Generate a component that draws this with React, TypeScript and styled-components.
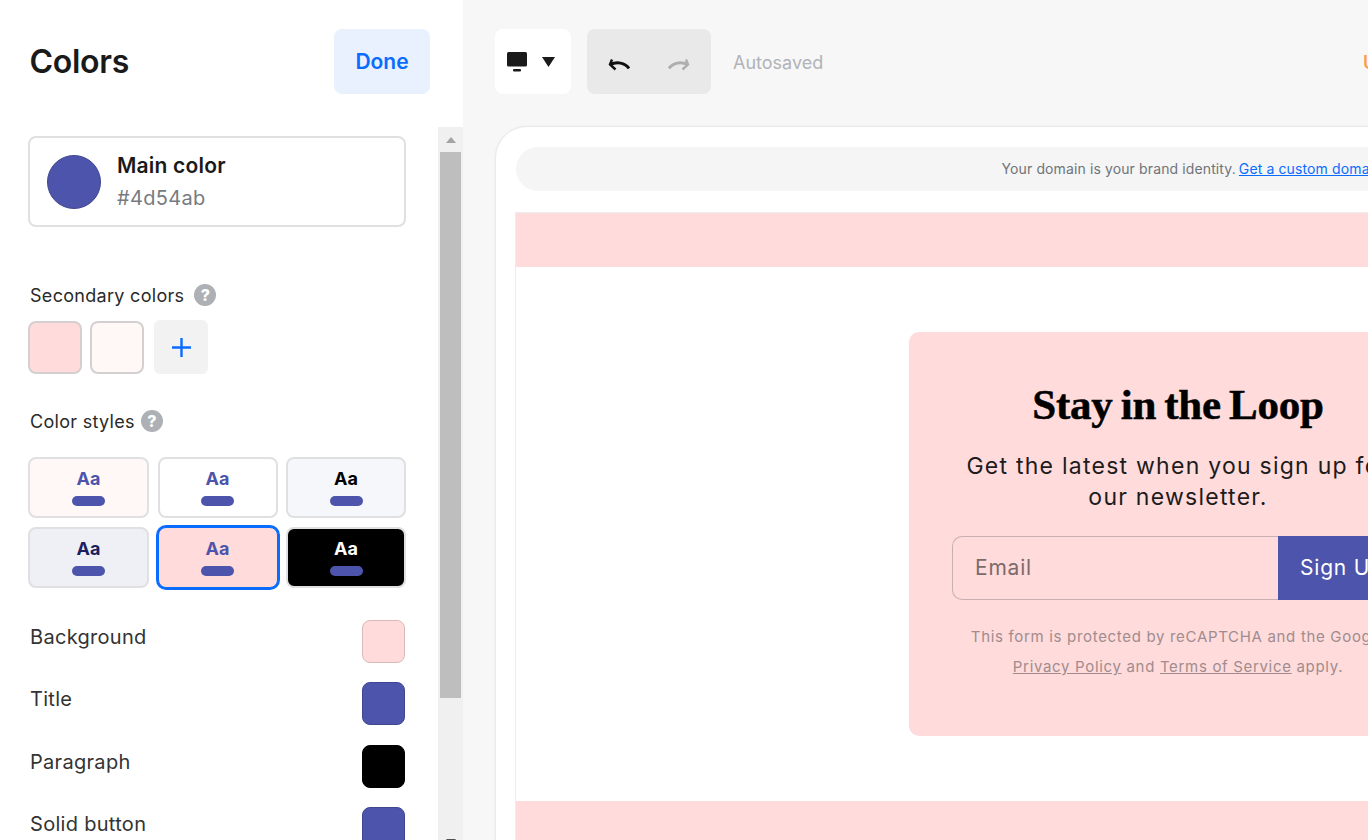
import React from "react";
import styled, { createGlobalStyle } from "styled-components";

const Global = createGlobalStyle`
  html, body { margin: 0; padding: 0; height: 100%; overflow: hidden; background: #f7f7f7; }
  #root { height: 100%; }
  * { box-sizing: border-box; }
`;

const Page = styled.div`
  display: flex;
  width: 100%;
  height: 840px;
  overflow: hidden;
  font-family: Inter, "Liberation Sans", sans-serif;
  color: #1a1a1a;
`;

const Sidebar = styled.aside`
  width: 463px;
  flex: none;
  height: 854px;
  display: flex;
  flex-direction: column;
  background: #fff;
`;

const SideHeader = styled.header`
  height: 127px;
  flex: none;
  display: flex;
  justify-content: space-between;
  padding: 29px 33px 0 29.5px;
`;

const Heading = styled.h1`
  margin: 0;
  font-size: 32px;
  line-height: 65px;
  font-weight: 600;
  letter-spacing: -0.3px;
  color: #1a1a1a;
`;

const DoneButton = styled.button`
  width: 96px;
  height: 65px;
  border: 0;
  border-radius: 8px;
  background: #e9f0fe;
  color: #0a6cff;
  font: 600 21px Inter, sans-serif;
`;

const SideBody = styled.div`
  flex: 1;
  min-height: 0;
  display: flex;
`;

const SideContent = styled.div`
  width: 438px;
  flex: none;
  overflow: hidden;
  padding: 9px 32px 0 28px;
`;

const Scrollbar = styled.div`
  width: 25px;
  flex: none;
  background: #f0f0f0;
  display: flex;
  flex-direction: column;
  align-items: center;
`;

const ArrowSlot = styled.div`
  width: 100%;
  height: 25px;
  flex: none;
  display: flex;
  align-items: center;
  justify-content: center;
`;

const ScrollTrack = styled.div`
  flex: 1;
  width: 100%;
  padding: 0 2px;
`;

const ScrollThumb = styled.div`
  height: 546px;
  background: #bebebe;
`;

const Triangle = styled.div<{ $down?: boolean }>`
  width: 0;
  height: 0;
  border-left: 5.5px solid transparent;
  border-right: 5.5px solid transparent;
  ${(p) =>
    p.$down
      ? `border-top: 6px solid #505050;`
      : `border-bottom: 6px solid #a3a3a3;`}
`;

const MainCard = styled.div`
  height: 91px;
  border: 2px solid #e0e0e2;
  border-radius: 8px;
  display: flex;
  align-items: center;
  padding-left: 17px;
  gap: 16px;
`;

const MainDot = styled.div`
  width: 54px;
  height: 54px;
  border-radius: 50%;
  background: #4d54ab;
  border: 1px solid #41478f;
`;

const MainText = styled.div`
  display: flex;
  flex-direction: column;
`;

const MainName = styled.div`
  font-size: 21px;
  line-height: 32px;
  font-weight: 600;
  letter-spacing: 0.2px;
  color: #1a1a1a;
`;

const MainHex = styled.div`
  font-size: 20px;
  line-height: 32px;
  letter-spacing: 0.3px;
  color: #777b80;
`;

const SectionLabel = styled.div<{ $top: number; $gap: number }>`
  display: flex;
  align-items: center;
  gap: ${(p) => p.$gap}px;
  height: 20px;
  margin-top: ${(p) => p.$top}px;
  padding-left: 2px;
  font-size: 18px;
  font-weight: 400;
  letter-spacing: 0.3px;
  color: #2a2a2a;
`;

const HelpDot = styled.span`
  width: 22px;
  height: 22px;
  border-radius: 50%;
  background: #adb0b4;
  color: #fff;
  font-size: 16px;
  font-weight: 800;
  display: inline-flex;
  align-items: center;
  justify-content: center;
  letter-spacing: 0;
`;

const SwatchRow = styled.div`
  display: flex;
  margin-top: 15px;
  align-items: flex-end;
`;

const SecondarySwatch = styled.div<{ $color: string }>`
  width: 54px;
  height: 53px;
  margin-right: 8px;
  border-radius: 8px;
  background: ${(p) => p.$color};
  border: 2px solid #d4d0d0;
`;

const AddSwatch = styled.button`
  width: 54px;
  height: 54px;
  margin-left: 2px;
  border: 0;
  border-radius: 6px;
  background: #f2f2f2;
  display: flex;
  align-items: center;
  justify-content: center;
  padding: 0;
`;

const StyleGrid = styled.div`
  display: grid;
  grid-template-columns: 121px 120px 120px;
  grid-auto-rows: 61px;
  gap: 9px 8.5px;
  margin-top: 26px;
`;

const StyleCard = styled.div<{ $bg: string; $selected?: boolean }>`
  display: flex;
  flex-direction: column;
  align-items: center;
  padding-top: 9px;
  border-radius: 8px;
  background: ${(p) => p.$bg};
  border: 2px solid #e0e0e2;
  ${(p) => p.$selected && `box-shadow: 0 0 0 2px #0a6cff; border-color: #0a6cff; border-width: 1px; padding-top: 10px;`}
`;

const StyleAa = styled.div<{ $color: string }>`
  font-size: 18px;
  line-height: 22px;
  font-weight: 700;
  color: ${(p) => p.$color};
`;

const StylePill = styled.div`
  width: 33px;
  height: 10px;
  margin-top: 6px;
  border-radius: 5px;
  background: #4d54ab;
`;

const ColorRows = styled.div`
  margin-top: 32px;
  display: flex;
  flex-direction: column;
  gap: 19.3px;
`;

const ColorRow = styled.div`
  display: flex;
  justify-content: space-between;
  align-items: flex-start;
  height: 43px;
  padding: 0 1px 0 2px;
`;

const ColorLabel = styled.div`
  font-size: 20px;
  line-height: 34px;
  font-weight: 400;
  letter-spacing: 0.3px;
  color: #333;
`;

const ColorSwatch = styled.div<{ $color: string; $edge: string }>`
  width: 43px;
  height: 43px;
  border-radius: 8px;
  background: ${(p) => p.$color};
  border: 1px solid ${(p) => p.$edge};
`;

const Main = styled.main`
  flex: 1;
  min-width: 0;
  height: 840px;
  overflow: hidden;
  background: #f7f7f7;
  padding-left: 32px;
`;

const Toolbar = styled.div`
  height: 126px;
  padding-top: 29px;
  display: flex;
  align-items: flex-start;
  width: 873px;
`;

const DeviceButton = styled.div`
  width: 76px;
  height: 65px;
  border-radius: 8px;
  background: #fff;
  display: flex;
  align-items: center;
  padding-left: 12px;
  gap: 15px;
`;

const HistoryGroup = styled.div`
  width: 124px;
  height: 65px;
  margin-left: 16px;
  border-radius: 8px;
  background: #e9e9e9;
  display: flex;
  align-items: center;
  padding: 6px 0 0 21px;
  gap: 38px;
`;

const Saved = styled.div`
  margin-left: 22px;
  line-height: 67px;
  font-size: 18px;
  color: #b0b3b8;
`;

const Upgrade = styled.div`
  margin-left: auto;
  line-height: 67px;
  font-size: 18px;
  font-weight: 600;
  color: #ff9c4a;
  white-space: nowrap;
  width: 5px;
`;

const Frame = styled.div`
  width: 1366px;
  height: 760px;
  padding: 20px 21px 0 20px;
  background: #fff;
  border: 1px solid #e9e9e9;
  border-radius: 32px 32px 0 0;
  box-shadow: 0 0 3px rgba(0, 0, 0, 0.04);
`;

const AddressBar = styled.div`
  height: 44px;
  padding: 0 0 2px 28px;
  border-radius: 22px;
  background: #f5f5f5;
  display: flex;
  align-items: center;
  justify-content: center;
  font-size: 14px;
  letter-spacing: 0.12px;
  color: #6f7479;
  gap: 3px;
`;

const DomainLink = styled.a`
  color: #0a6cff;
  text-decoration: underline;
`;

const Site = styled.div`
  margin: 21px 0 0 -1px;
  border-left: 1px solid #ececec;
  border-top: 1px solid #ececec;
  width: 1325px;
`;

const Band = styled.div<{ $h: number }>`
  height: ${(p) => p.$h}px;
  background: #ffdbdb;
`;

const Hero = styled.section`
  height: 534px;
  background: #fff;
  display: flex;
  justify-content: center;
  padding-top: 65px;
`;

const Card = styled.div`
  width: 538px;
  height: 404px;
  border-radius: 10px;
  background: #ffdbdb;
  padding: 50px 43px 0;
  text-align: center;
  font-family: Inter, "Open Sans", sans-serif;
`;

const CardTitle = styled.h2`
  margin: 0;
  font-family: "Liberation Serif", serif;
  font-size: 43px;
  line-height: 46px;
  font-weight: 700;
  letter-spacing: -0.2px;
  word-spacing: -2.5px;
  color: #000;
  -webkit-text-stroke: 0.5px #000;
`;

const CardText = styled.p`
  margin: 23px -20px 0;
  font-size: 23px;
  line-height: 31px;
  letter-spacing: 1.25px;
  color: #1c1c1c;
`;

const Form = styled.div`
  display: flex;
  height: 64px;
  margin-top: 23px;
`;

const EmailInput = styled.div`
  width: 326px;
  height: 64px;
  border: 1px solid #c9afb1;
  border-right: 0;
  border-radius: 10px 0 0 10px;
  padding-left: 22px;
  text-align: left;
  font-size: 21px;
  line-height: 61px;
  letter-spacing: 0.8px;
  color: #7c6a6c;
`;

const SignUp = styled.div`
  flex: 1;
  background: #4d54ab;
  color: #fff;
  font-size: 21px;
  font-weight: 400;
  line-height: 63px;
  letter-spacing: 0.8px;
  text-align: left;
  padding-left: 22px;
  white-space: nowrap;
`;

const Legal = styled.p`
  margin: 22px -30px 0;
  font-size: 15px;
  line-height: 30px;
  letter-spacing: 0.68px;
  color: #a08c8e;
`;

const LegalLink = styled.a`
  color: #a08c8e;
  text-decoration: underline;
`;

const styles = [
  { bg: "#fff8f7", aa: "#4d54ab" },
  { bg: "#ffffff", aa: "#4d54ab" },
  { bg: "#f6f7fb", aa: "#000000" },
  { bg: "#efeff6", aa: "#1c2060" },
  { bg: "#ffdbdb", aa: "#4d54ab", selected: true },
  { bg: "#000000", aa: "#ffffff" },
];

const rows = [
  { label: "Background", color: "#ffdbdb", edge: "#dcb8b8" },
  { label: "Title", color: "#4d54ab", edge: "#41478f" },
  { label: "Paragraph", color: "#000000", edge: "#000000" },
  { label: "Solid button", color: "#4d54ab", edge: "#41478f" },
];

export default function App() {
  return (
    <Page>
      <Global />
      <Sidebar>
        <SideHeader>
          <Heading>Colors</Heading>
          <DoneButton>Done</DoneButton>
        </SideHeader>
        <SideBody>
          <SideContent>
            <MainCard>
              <MainDot />
              <MainText>
                <MainName>Main color</MainName>
                <MainHex>#4d54ab</MainHex>
              </MainText>
            </MainCard>
            <SectionLabel $top={58} $gap={10}>
              Secondary colors <HelpDot>?</HelpDot>
            </SectionLabel>
            <SwatchRow>
              <SecondarySwatch $color="#ffdbdb" />
              <SecondarySwatch $color="#fff8f7" />
              <AddSwatch>
                <svg width="19" height="19" viewBox="0 0 19 19" fill="none">
                  <path d="M9.5 0v19M0 9.5h19" stroke="#0a6cff" strokeWidth="2.4" />
                </svg>
              </AddSwatch>
            </SwatchRow>
            <SectionLabel $top={37} $gap={6}>
              Color styles <HelpDot>?</HelpDot>
            </SectionLabel>
            <StyleGrid>
              {styles.map((s, i) => (
                <StyleCard key={i} $bg={s.bg} $selected={s.selected}>
                  <StyleAa $color={s.aa}>Aa</StyleAa>
                  <StylePill />
                </StyleCard>
              ))}
            </StyleGrid>
            <ColorRows>
              {rows.map((r) => (
                <ColorRow key={r.label}>
                  <ColorLabel>{r.label}</ColorLabel>
                  <ColorSwatch $color={r.color} $edge={r.edge} />
                </ColorRow>
              ))}
            </ColorRows>
          </SideContent>
          <Scrollbar>
            <ArrowSlot><Triangle /></ArrowSlot>
            <ScrollTrack><ScrollThumb /></ScrollTrack>
            <ArrowSlot><Triangle $down /></ArrowSlot>
          </Scrollbar>
        </SideBody>
      </Sidebar>
      <Main>
        <Toolbar>
          <DeviceButton>
            <svg width="20" height="20" viewBox="0 0 20 20" fill="#1a1a1a">
              <rect x="0" y="0" width="20" height="14.5" rx="1.5" />
              <rect x="6" y="17" width="8" height="2.5" rx="1" />
            </svg>
            <svg width="13" height="10" viewBox="0 0 13 10" fill="#1a1a1a">
              <path d="M0 0h13L6.5 10z" />
            </svg>
          </DeviceButton>
          <HistoryGroup>
            <svg width="22" height="12" viewBox="0 0 22 12" fill="none" stroke="#111">
              <path d="M21 9.5C17 3.5 9 2.5 2 5.5" strokeWidth="3" />
              <path d="M4 .5L2 5.5l5.5 5" strokeWidth="2.4" />
            </svg>
            <svg width="22" height="12" viewBox="0 0 22 12" fill="none" stroke="#aeaeae">
              <path d="M1 9.5C5 3.5 13 2.5 20 5.5" strokeWidth="3" />
              <path d="M18 .5l2 5-5.5 5" strokeWidth="2.4" />
            </svg>
          </HistoryGroup>
          <Saved>Autosaved</Saved>
          <Upgrade>Upgrade</Upgrade>
        </Toolbar>
        <Frame>
          <AddressBar>
            <span>Your domain is your brand identity.</span>
            <DomainLink>Get a custom domain</DomainLink>
          </AddressBar>
          <Site>
            <Band $h={54} />
            <Hero>
              <Card>
                <CardTitle>Stay in the Loop</CardTitle>
                <CardText>Get the latest when you sign up for<br />our newsletter.</CardText>
                <Form>
                  <EmailInput>Email</EmailInput>
                  <SignUp>Sign Up</SignUp>
                </Form>
                <Legal>
                  This form is protected by reCAPTCHA and the Google<br />
                  <LegalLink>Privacy Policy</LegalLink> and <LegalLink>Terms of Service</LegalLink> apply.
                </Legal>
              </Card>
            </Hero>
            <Band $h={60} />
          </Site>
        </Frame>
      </Main>
    </Page>
  );
}
